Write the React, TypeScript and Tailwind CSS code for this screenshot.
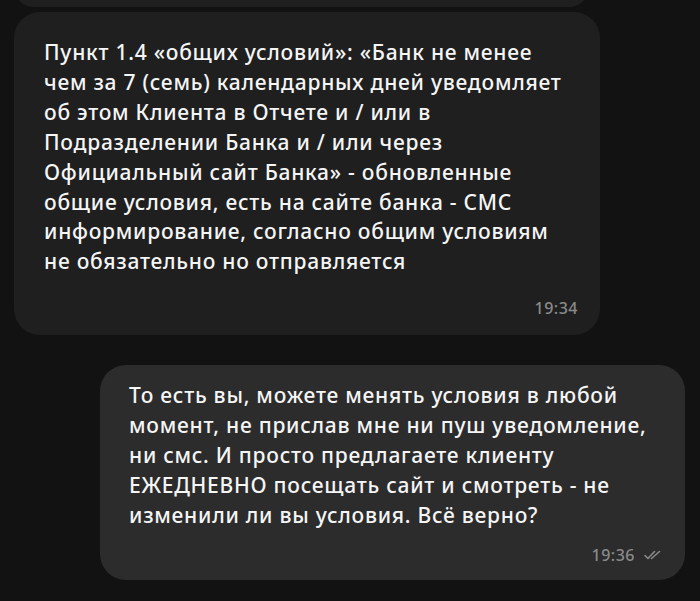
import React from "react";

const incoming = [
  "Пункт 1.4 «общих условий»: «Банк не менее",
  "чем за 7 (семь) календарных дней уведомляет",
  "об этом Клиента в Отчете и / или в",
  "Подразделении Банка и / или через",
  "Официальный сайт Банка» - обновленные",
  "общие условия, есть на сайте банка - СМС",
  "информирование, согласно общим условиям",
  "не обязательно но отправляется",
];

const outgoing = [
  "То есть вы, можете менять условия в любой",
  "момент, не прислав мне ни пуш уведомление,",
  "ни смс. И просто предлагаете клиенту",
  "ЕЖЕДНЕВНО посещать сайт и смотреть - не",
  "изменили ли вы условия. Всё верно?",
];

function DoubleCheck() {
  return (
    <svg width="17" height="10" viewBox="0 0 17 10" fill="none" className="text-[#8a8a8a]">
      <path d="M1 5.5l3 3L10.5 1.5" stroke="currentColor" strokeWidth="1.6" strokeLinecap="round" strokeLinejoin="round" />
      <path d="M7.5 8.5L15.5 1.5" stroke="currentColor" strokeWidth="1.6" strokeLinecap="round" strokeLinejoin="round" />
    </svg>
  );
}

export default function App() {
  return (
    <div
      className="w-[700px] h-[601px] overflow-hidden bg-[#121212] text-white flex flex-col"
      style={{ fontFamily: '"Noto Sans", "Open Sans", sans-serif' }}
    >
      {/* previous message, only its bottom is visible */}
      <div className="ml-[14px] w-[575px] h-[40px] mt-[-33px] rounded-[26px] bg-[#1f1f1f] shrink-0" />

      <div className="ml-[14px] mt-[5px] w-[586px] h-[323px] rounded-[26px] bg-[#1f1f1f] pl-[30px] pr-[10px] pt-[26px] flex flex-col shrink-0">
        <div className="text-[21px] font-medium leading-[29.9px] tracking-[0.75px] text-[#f5f5f5] whitespace-nowrap">
          {incoming.map((l) => (
            <div key={l}>{l}</div>
          ))}
        </div>
        <div className="mt-[19px] mr-[12px] self-end text-[16px] font-medium tracking-[0.5px] text-[#8a8a8a]">19:34</div>
      </div>

      <div className="self-end mr-[15px] mt-[30px] w-[585px] h-[215px] rounded-[26px] bg-[#2c2c2c] pl-[29px] pr-[10px] pt-[15px] flex flex-col shrink-0">
        <div className="text-[21px] font-medium leading-[30px] tracking-[0.75px] text-[#f5f5f5] whitespace-nowrap">
          {outgoing.map((l) => (
            <div key={l}>{l}</div>
          ))}
        </div>
        <div className="mt-[13px] mr-[14px] self-end flex items-center gap-[9px] text-[16px] font-medium tracking-[0.5px] text-[#8a8a8a]">
          <span>19:36</span>
          <DoubleCheck />
        </div>
      </div>
    </div>
  );
}
